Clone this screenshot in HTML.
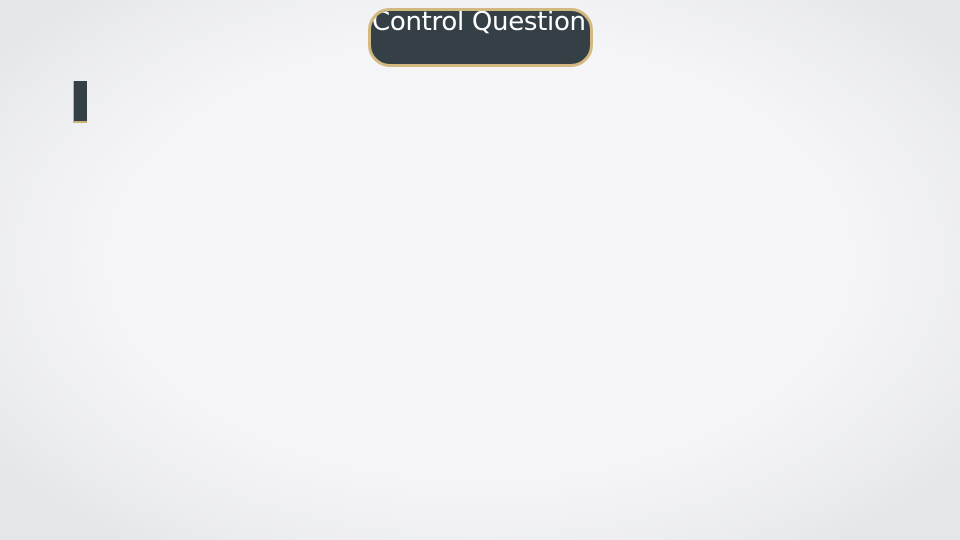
<!DOCTYPE html>
<html><head><style>
html,body{margin:0;padding:0}
body{width:960px;height:540px;overflow:hidden;position:relative;
background:radial-gradient(ellipse 62% 66% at 50% 48%,#f6f6f9 0%,#f5f5f8 62%,#ebecef 88%,#e5e6e9 100%);
font-family:"Liberation Sans",sans-serif}
.pill{position:absolute;left:368px;top:8px;width:219px;height:53px;border:3px solid #d2b97f;border-radius:22px;background:#353f46;overflow:hidden}
.pill span{position:absolute;left:1px;top:-4px;color:#fff;font-family:"DejaVu Sans",sans-serif;font-size:26px;white-space:nowrap;letter-spacing:-0.3px}
.bar{position:absolute;left:73px;top:81px;width:13px;height:40px;background:#353f46;border-left:1px solid #c9b27a;border-bottom:2px solid #c9b27a}
</style></head><body>
<div class="pill"><span>Control Question</span></div>
<div class="bar"></div>
</body></html>
